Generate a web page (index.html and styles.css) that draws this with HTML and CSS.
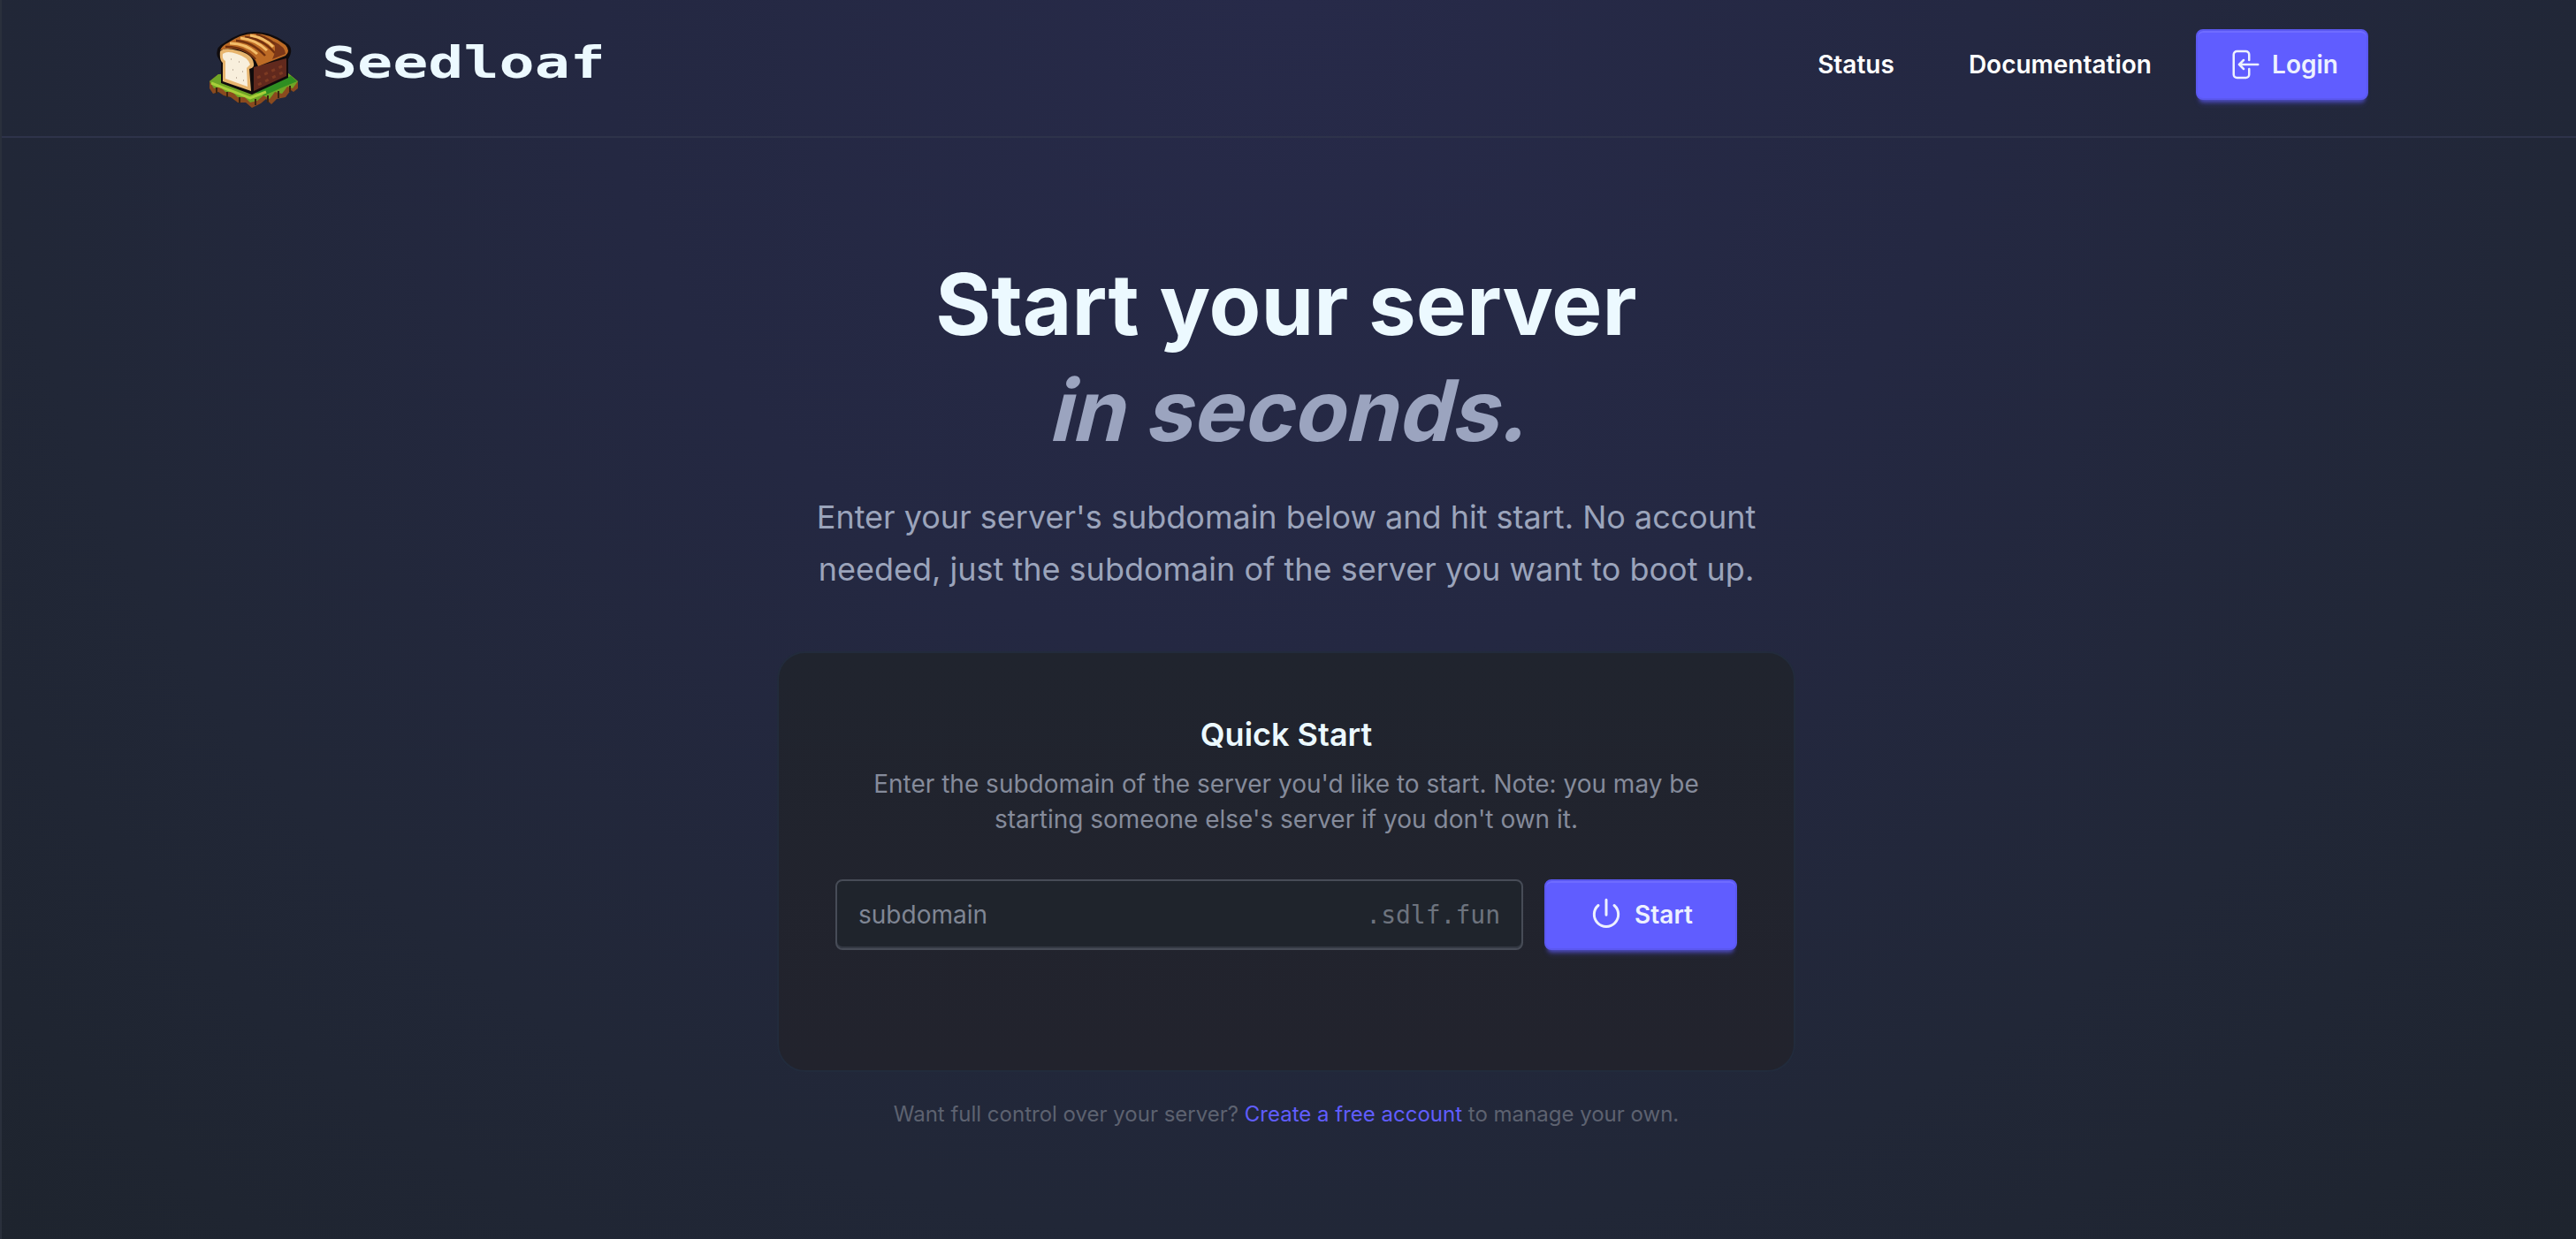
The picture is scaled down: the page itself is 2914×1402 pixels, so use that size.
FILE: index.html
```html
<!DOCTYPE html>
<html lang="en">
<head>
  <meta charset="UTF-8" />
  <meta name="viewport" content="width=device-width, initial-scale=1.0"/>
  <title>Seedloaf</title>
  <link rel="stylesheet" href="styles.css">
</head>
<body>
  <header class="header">
    <a class="brand" href="#">
      <svg class="logo" viewBox="0 0 125 110">
        <!-- grass -->
        <path d="M12 68L22 60L100 58L112 68L112 76L107 80L104 78L98 86L88 88L82 94L76 88L70 93L60 98L53 92L44 92L36 86L28 84L22 80L16 82L12 76Z" fill="#8a4a1e"/>
        <path d="M12 68L22 60L100 58L112 68L106 76L100 74L94 82L86 80L80 88L73 84L66 90L58 92L52 86L44 86L38 80L30 80L24 74L17 76Z" fill="#6fa526"/>
        <path d="M62 80L104 62L111 68L92 76L74 84Z" fill="#2f8f22"/>
        <path d="M14 70L58 87L76 80" fill="none" stroke="#a8cf3a" stroke-width="3"/>
        <path d="M20 75v7M32 80v6M46 86v7M64 88v7M78 84v8M90 79v8M103 73v7" stroke="#3a2411" stroke-width="2"/>
        <!-- loaf -->
        <path d="M21 40Q18 30 28 25Q46 12 62 12Q84 12 102 27Q107 33 101 43L101 64L60 83L25 70V47Z" fill="#100b0c"/>
        <path d="M62 52L99 42V62L62 79Z" fill="#61291d"/>
        <path d="M66 64L98 49M67 72L97 57" stroke="#7d3a22" stroke-width="3" stroke-dasharray="4 5"/>
        <path d="M24 33Q26 28 32 25Q48 14 62 14Q82 14 98 27Q104 34 98 39L67 51Q62 37 48 33Q35 29 24 33Z" fill="#bd6b25"/>
        <path d="M30 29Q50 28 64 43M42 22Q60 23 75 39M52 18Q71 19 86 36M65 15Q82 20 94 33" fill="none" stroke="#71300f" stroke-width="2.5"/>
        <path d="M35 25Q53 25 66 37M47 19Q65 21 77 33M58 16Q75 19 84 29" fill="none" stroke="#f3bd69" stroke-width="3"/>
        <path d="M85 23Q98 29 98 37L83 43Q88 33 85 23Z" fill="#7c3718"/>
        <path d="M24 34Q30 29 43 33Q61 37 62 48Q63 53 57 54L59 79L27 68L27 47Q23 44 24 34Z" fill="#e7b56e"/>
        <path d="M27 37Q32 33 43 37Q56 41 58 49L54 53L55 74L30 65V45Q26 43 27 37Z" fill="#f8efdc"/>
        <path d="M36 43h1M45 46h1M38 55h1M49 57h1M42 64h1M50 67h1" stroke="#c6b7a5" stroke-width="2"/>
      </svg>
      <span class="brand-name">Seedloaf</span>
    </a>
    <nav class="nav">
      <a class="nav-link" href="#">Status</a>
      <a class="nav-link" href="#">Documentation</a>
      <button class="btn btn-login">
        <svg class="icon" viewBox="0 0 24 24">
          <path d="M15.75 9V5.25A2.25 2.25 0 0 0 13.5 3h-6a2.25 2.25 0 0 0-2.25 2.25v13.5A2.25 2.25 0 0 0 7.5 21h6a2.25 2.25 0 0 0 2.25-2.25V15M12 9l-3 3m0 0 3 3m-3-3h12.75"/>
        </svg>
        Login
      </button>
    </nav>
  </header>

  <main class="hero">
    <h1 class="title">Start your server<br><em>in seconds.</em></h1>
    <p class="lead">Enter your server's subdomain below and hit start. No account<br>needed, just the subdomain of the server you want to boot up.</p>

    <section class="card">
      <h2 class="card-title">Quick Start</h2>
      <p class="card-text">Enter the subdomain of the server you'd like to start. Note: you may be<br>starting someone else's server if you don't own it.</p>
      <form class="form">
        <label class="field">
          <input class="field-input" type="text" placeholder="subdomain" />
          <span class="suffix">.sdlf.fun</span>
        </label>
        <button class="btn btn-start" type="button">
          <svg class="icon icon-power" viewBox="0 0 24 24">
            <path d="M6.6 5.7a8.2 8.2 0 1 0 10.8 0M12 1.9v10.2"/>
          </svg>
          Start
        </button>
      </form>
    </section>

    <p class="note">Want full control over your server? <a href="#">Create a free account</a> to manage your own.</p>
  </main>
</body>
</html>
```
FILE: styles.css
```css
* {
  box-sizing: border-box;
}

body {
  margin: 0;
  height: 100vh;
  overflow: hidden;
  font-family: 'Inter', sans-serif;
  color: #ecf9ff;
  background: radial-gradient(ellipse at 50% 0%, #272a49 0%, #242842 38%, #212737 71%, #1e242e 100%);
  border-left: 2px solid #2a303c;
}

a {
  color: inherit;
  text-decoration: none;
}

.header {
  height: 156px;
  padding: 0 235px 8px 233px;
  border-bottom: 2px solid #2e334a;
  display: flex;
  align-items: center;
  justify-content: space-between;
}

.brand {
  display: flex;
  align-items: center;
}

.logo {
  width: 125px;
  height: 110px;
  margin: 12px 0 0 -10px;
}

.brand-name {
  margin: 0 0 3px 14px;
  font-family: 'DejaVu Sans Mono', monospace;
  font-size: 49px;
  font-weight: bold;
  transform: scaleX(1.36);
  transform-origin: left;
}

.nav {
  display: flex;
  align-items: center;
}

.nav-link {
  margin-right: 84px;
  font-size: 28px;
  font-weight: 600;
  color: #fff;
}

.nav-link + .nav-link {
  margin-right: 50px;
}

.btn {
  height: 80px;
  display: flex;
  align-items: center;
  justify-content: center;
  gap: 12px;
  font-family: inherit;
  font-size: 28px;
  font-weight: 600;
  color: #edf1fe;
  background-color: #605dff;
  border: 2px solid #5b58f0;
  border-radius: 8px;
  box-shadow: inset 0 2px 0 #6f6cff, 0 6px 4px -4px rgba(96,93,255,0.6), 0 8px 6px -4px rgba(96,93,255,0.3);
}

.btn-login {
  width: 195px;
}

.btn-start {
  width: 218px;
}

.icon {
  width: 40px;
  height: 40px;
  fill: none;
  stroke: currentColor;
  stroke-width: 1.5;
  stroke-linecap: round;
  stroke-linejoin: round;
}

.icon-power {
  stroke-width: 1.8;
}

.hero {
  display: flex;
  flex-direction: column;
  align-items: center;
  padding: 128px 6px 0 0;
  text-align: center;
}

.title {
  margin: 0;
  font-size: 96px;
  font-weight: 700;
  line-height: 120px;
}

.title em {
  display: inline-block;
  font-style: normal;
  color: #9ba4bf;
  transform: skewX(-13.5deg);
  transform-origin: 50% 79%;
}

.lead {
  margin: 32px 0 0;
  font-size: 36px;
  line-height: 58.5px;
  color: #9ba4bb;
}

.card {
  width: 1152px;
  height: 476px;
  margin-top: 64px;
  padding: 64px 64px 0;
  background: linear-gradient(#20242e, #22232d);
  border: 2px solid #222b3c;
  border-radius: 32px;
}

.card-title {
  margin: 0;
  font-size: 36px;
  font-weight: 600;
  line-height: 56px;
}

.card-text {
  margin: 8px 0 0;
  font-size: 28px;
  line-height: 40px;
  color: #858b9b;
}

.form {
  display: flex;
  gap: 24px;
  margin-top: 48px;
}

.field {
  flex: 1;
  height: 80px;
  padding: 0 24px;
  display: flex;
  align-items: center;
  background-color: #1f242c;
  border: 2px solid #474c57;
  border-radius: 8px;
  box-shadow: inset 0 -2px 0 #343944;
}

.field-input {
  flex: 1;
  min-width: 0;
  padding: 0;
  font-family: inherit;
  font-size: 28px;
  background: none;
  border: none;
  outline: none;
}

.field-input::placeholder {
  color: #7f8694;
}

.suffix {
  font-family: 'DejaVu Sans Mono', monospace;
  font-size: 28px;
  color: #6d737e;
}

.note {
  margin: 32px 0 0;
  font-size: 24px;
  line-height: 32px;
  color: #5d6270;
}

.note a {
  color: #605dff;
}
```
